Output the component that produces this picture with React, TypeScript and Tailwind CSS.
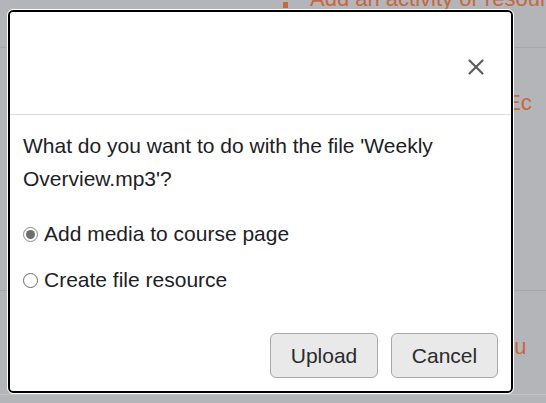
import { X } from "lucide-react";

function Radio({ checked }: { checked?: boolean }) {
  return (
    <span
      className={
        "flex h-[15px] w-[15px] shrink-0 items-center justify-center rounded-full border bg-white " +
        (checked ? "border-[#8a8a8a]" : "border-[#6b6b6b]")
      }
    >
      {checked && <span className="h-[9px] w-[9px] rounded-full bg-[#6f6f6f]" />}
    </span>
  );
}

export default function App() {
  return (
    <div
      className="relative h-[403px] w-[546px] overflow-hidden bg-[#b4b5b8]"
      style={{ fontFamily: '"Liberation Sans", Arial, sans-serif' }}
    >
      {/* page behind the modal */}
      <div className="absolute inset-0">
        <div className="absolute left-[283px] top-[-18px] flex items-center gap-[22px] whitespace-nowrap text-[22px] text-[#c5673f]">
          <span className="mt-[12px] h-[6px] w-[5px] shrink-0 bg-[#c5673f]" />
          <span>Add an activity or resource</span>
        </div>
        <div className="absolute left-0 right-0 top-[47px] h-px bg-[#a6a7aa]" />
        <div className="absolute left-[506px] top-[86px] text-[22px] text-[#c5673f]">Ec</div>
        <div className="absolute left-0 right-0 top-[290px] h-px bg-[#a6a7aa]" />
        <div className="absolute left-[502px] top-[330px] text-[22px] text-[#c5673f]">ou</div>
        <div className="absolute left-0 right-0 top-[394px] h-px bg-[#c2c3c6]" />
      </div>

      {/* modal */}
      <div className="absolute left-[8px] top-[10px] flex h-[383px] w-[505px] flex-col rounded-[5px] border-2 border-black bg-white outline outline-1 outline-white">
        <div className="flex h-[103px] items-center justify-end border-b border-[#dcdcdc] pr-[22px]">
          <X size={26} strokeWidth={2.1} className="mt-[8px] text-[#5f5f5f]" />
        </div>
        <div className="flex flex-1 flex-col px-[13px] pt-[14px] text-[21px] text-[#1d2125]">
          <p className="leading-[33px]">
            What do you want to do with the file 'Weekly Overview.mp3'?
          </p>
          <div className="mt-[27px] flex flex-col gap-[22px]">
            <label className="flex h-[24px] items-center gap-[6px]">
              <Radio checked />
              <span>Add media to course page</span>
            </label>
            <label className="flex h-[24px] items-center gap-[6px]">
              <Radio />
              <span>Create file resource</span>
            </label>
          </div>
        </div>
        <div className="flex justify-end gap-[13px] px-[13px] pb-[13px]">
          <button className="h-[45px] w-[108px] rounded-[6px] border border-[#a9a9a9] bg-[#e9e9e9] text-[21px] text-[#2b2b2b]">
            Upload
          </button>
          <button className="h-[45px] w-[107px] rounded-[6px] border border-[#a9a9a9] bg-[#e9e9e9] text-[21px] text-[#2b2b2b]">
            Cancel
          </button>
        </div>
      </div>
    </div>
  );
}
